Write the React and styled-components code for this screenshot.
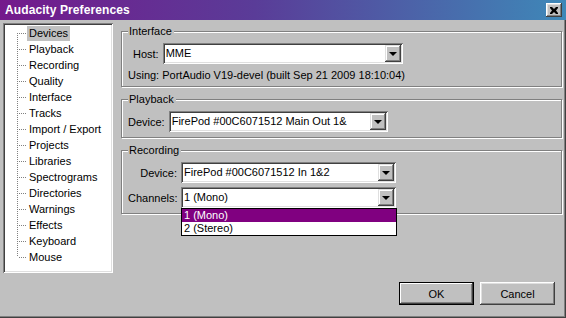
import React from 'react'
import styled, { createGlobalStyle } from 'styled-components'

const GlobalStyle = createGlobalStyle`
  html, body {
    margin: 0;
    padding: 0;
    background: #c0c0c0;
  }
  body {
    font-family: "Liberation Sans", Arial, sans-serif;
    font-size: 11px;
    color: #000;
  }
`

const Window = styled.div`
  width: 566px;
  height: 318px;
  box-sizing: border-box;
  background: #c0c0c0;
  display: flex;
  flex-direction: column;
  box-shadow: inset -1px -1px 0 #404040, inset -2px -2px 0 #808080;
`

const TitleBar = styled.div`
  height: 20px;
  flex: none;
  display: flex;
  align-items: center;
  justify-content: space-between;
  padding: 0 4px 0 5px;
  background: linear-gradient(to right, #741a8c 0%, #5a3c98 45%, #3e88b8 100%);
`

const Title = styled.span`
  color: #fff;
  font-weight: bold;
  font-size: 12px;
  letter-spacing: 0.1px;
`

const CloseButton = styled.div`
  width: 16px;
  height: 14px;
  box-sizing: border-box;
  background: #c0c0c0;
  display: flex;
  align-items: center;
  justify-content: center;
  box-shadow: inset -1px -1px 0 #404040, inset 1px 1px 0 #fff, inset -2px -2px 0 #808080, inset 2px 2px 0 #dfdfdf;
`

const Body = styled.div`
  display: flex;
  padding: 3px 0 0 3px;
  gap: 8px;
`

const Tree = styled.ul`
  list-style: none;
  margin: 0;
  padding: 2px;
  width: 110px;
  height: 250px;
  box-sizing: border-box;
  background: #fff;
  flex: none;
  box-shadow: inset 1px 1px 0 #808080, inset -1px -1px 0 #fff, inset 2px 2px 0 #404040, inset -2px -2px 0 #dfdfdf;
`

const TreeItem = styled.li`
  position: relative;
  height: 16px;
  display: flex;
  align-items: center;
  padding-left: 22px;

  &::before {
    content: '';
    position: absolute;
    left: 12px;
    width: 1px;
    top: ${p => (p.$first ? '8px' : '0')};
    height: ${p => (p.$last ? '8px' : p.$first ? '8px' : '16px')};
    background: repeating-linear-gradient(to bottom, #808080 0 1px, transparent 1px 2px);
  }

  &::after {
    content: '';
    position: absolute;
    left: 13px;
    top: 8px;
    width: 9px;
    height: 1px;
    background: repeating-linear-gradient(to right, transparent 0 1px, #808080 1px 2px);
  }
`

const TreeLabel = styled.span`
  padding: 1px 2px;
  line-height: 13px;
  background: ${p => (p.$selected ? '#c0c0c0' : 'transparent')};
`

const Pages = styled.div`
  flex: 1;
  display: flex;
  flex-direction: column;
  gap: 12px;
  padding: 8px 4px 0 0;
`

const Group = styled.div`
  position: relative;
  height: ${p => p.$height}px;
  box-sizing: border-box;
  border: 1px solid #808080;
  box-shadow: inset 1px 1px 0 #fff, 1px 1px 0 #fff;
  padding: ${p => p.$padTop}px 0 0 6px;
  display: flex;
  flex-direction: column;
`

const Legend = styled.span`
  position: absolute;
  top: -8px;
  left: 6px;
  padding: 0 2px 0 1px;
  background: #c0c0c0;
  line-height: 14px;
`

const Row = styled.div`
  display: flex;
  align-items: center;
  gap: ${p => p.$gap || 4}px;
  padding-left: ${p => p.$indent || 0}px;
`

const FormGrid = styled.div`
  display: grid;
  grid-template-columns: 49px 215px;
  column-gap: 4px;
  row-gap: 4px;
  align-items: center;
`

const FieldLabel = styled.span`
  text-align: right;
  white-space: nowrap;
`

const InfoText = styled.div`
  margin-top: 4px;
  line-height: 14px;
`

const SelectBox = styled.div`
  position: relative;
  width: ${p => p.$width}px;
  height: 21px;
  box-sizing: border-box;
  display: flex;
  padding: 2px;
  background: #fff;
  box-shadow: inset 1px 1px 0 #808080, inset -1px -1px 0 #fff, inset 2px 2px 0 #404040, inset -2px -2px 0 #dfdfdf;
`

const SelectValue = styled.span`
  flex: 1;
  line-height: 17px;
  padding-left: 1px;
  white-space: nowrap;
  overflow: hidden;
`

const DropButton = styled.span`
  width: 16px;
  height: 17px;
  flex: none;
  box-sizing: border-box;
  background: #c0c0c0;
  display: flex;
  align-items: center;
  justify-content: center;
  box-shadow: inset -1px -1px 0 #404040, inset 1px 1px 0 #dfdfdf, inset -2px -2px 0 #808080, inset 2px 2px 0 #fff;
`

const Arrow = styled.span`
  width: 0;
  height: 0;
  border-left: 4px solid transparent;
  border-right: 4px solid transparent;
  border-top: 4px solid #000;
  margin-top: 1px;
`

const DropList = styled.ul`
  position: absolute;
  top: 100%;
  left: 0;
  width: 216px;
  margin: 0;
  padding: 0;
  list-style: none;
  box-sizing: border-box;
  border: 1px solid #000;
  background: #fff;
  z-index: 2;
`

const DropItem = styled.li`
  height: 13px;
  line-height: 13px;
  padding-left: 2px;
  background: ${p => (p.$active ? '#800080' : '#fff')};
  color: ${p => (p.$active ? '#fff' : '#000')};
`

const Footer = styled.div`
  display: flex;
  justify-content: flex-end;
  gap: 6px;
  padding: 9px 11px 0 0;
`

const Button = styled.button`
  width: 75px;
  height: 23px;
  font-family: inherit;
  font-size: 11px;
  color: #000;
  background: #c0c0c0;
  border: ${p => (p.$default ? '1px solid #000' : 'none')};
  padding: 0;
  box-sizing: border-box;
  box-shadow: ${p =>
    p.$default
      ? 'inset -1px -1px 0 #404040, inset 1px 1px 0 #fff, inset -2px -2px 0 #808080'
      : 'inset -1px -1px 0 #404040, inset 1px 1px 0 #fff, inset -2px -2px 0 #808080, inset 2px 2px 0 #dfdfdf'};
`

const pages = [
  'Devices', 'Playback', 'Recording', 'Quality', 'Interface', 'Tracks', 'Import / Export',
  'Projects', 'Libraries', 'Spectrograms', 'Directories', 'Warnings', 'Effects', 'Keyboard', 'Mouse',
]

function Select({ width, value, children }) {
  return (
    <SelectBox $width={width}>
      <SelectValue>{value}</SelectValue>
      <DropButton><Arrow /></DropButton>
      {children}
    </SelectBox>
  )
}

export default function App() {
  return (
    <>
      <GlobalStyle />
      <Window>
        <TitleBar>
          <Title>Audacity Preferences</Title>
          <CloseButton>
            <svg width="8" height="7" viewBox="0 0 8 7">
              <path d="M0 0h2l2 2 2-2h2v1L6 3.5 8 6v1H6L4 5 2 7H0V6l2-2.5L0 1z" fill="#000" />
            </svg>
          </CloseButton>
        </TitleBar>
        <Body>
          <Tree>
            {pages.map((name, i) => (
              <TreeItem key={name} $first={i === 0} $last={i === pages.length - 1}>
                <TreeLabel $selected={i === 0}>{name}</TreeLabel>
              </TreeItem>
            ))}
          </Tree>
          <Pages>
            <Group $height={56} $padTop={11}>
              <Legend>Interface</Legend>
              <Row $indent={5}>
                <FieldLabel>Host:</FieldLabel>
                <Select width={240} value="MME" />
              </Row>
              <InfoText>Using: PortAudio V19-devel (built Sep 21 2009 18:10:04)</InfoText>
            </Group>
            <Group $height={39} $padTop={11}>
              <Legend>Playback</Legend>
              <Row>
                <FieldLabel>Device:</FieldLabel>
                <Select width={219} value="FirePod #00C6071512 Main Out 1&" />
              </Row>
            </Group>
            <Group $height={64} $padTop={11}>
              <Legend>Recording</Legend>
              <FormGrid>
                <FieldLabel>Device:</FieldLabel>
                <Select width={215} value="FirePod #00C6071512 In 1&2" />
                <FieldLabel>Channels:</FieldLabel>
                <Select width={215} value="1 (Mono)">
                  <DropList>
                    <DropItem $active>1 (Mono)</DropItem>
                    <DropItem>2 (Stereo)</DropItem>
                  </DropList>
                </Select>
              </FormGrid>
            </Group>
          </Pages>
        </Body>
        <Footer>
          <Button $default>OK</Button>
          <Button>Cancel</Button>
        </Footer>
      </Window>
    </>
  )
}
